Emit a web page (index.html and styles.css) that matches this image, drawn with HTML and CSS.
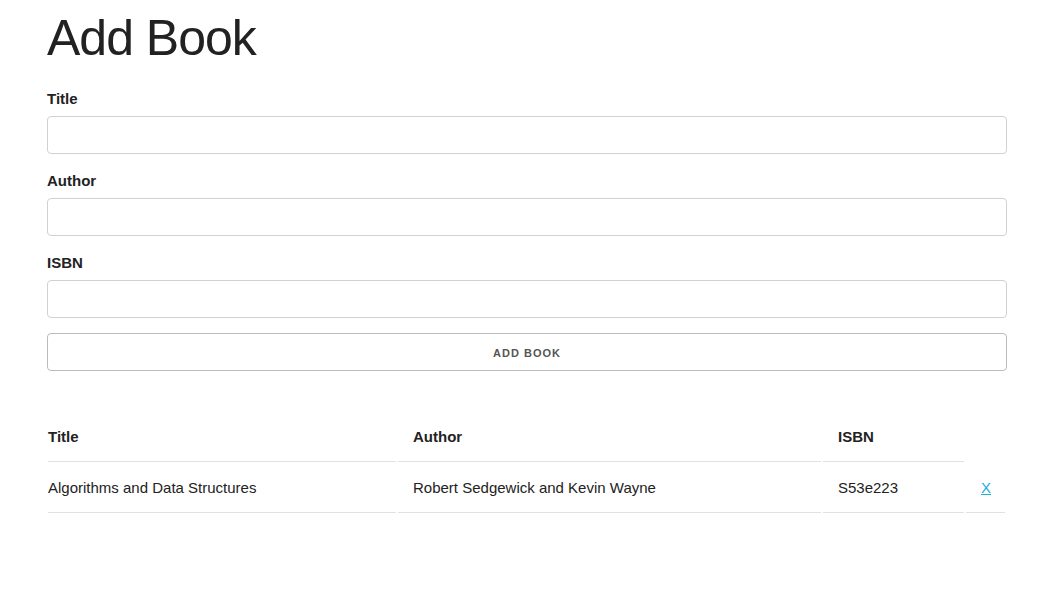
FILE: index.html
```html
<!DOCTYPE html>
<html lang="en">
<head>
    <meta charset="UTF-8">
    <meta name="viewport" content="width=device-width, initial-scale=1.0">
    <title>Add Book</title>
    <link rel="stylesheet" href="styles.css">
</head>
<body>

    <div class="container">
        <h1>Add Book</h1>
        <form id="book-form">
            <label for="title">Title</label>
            <input type="text" id="title" class="u-full-width">

            <label for="author">Author</label>
            <input type="text" id="author" class="u-full-width">

            <label for="isbn">ISBN</label>
            <input type="text" id="isbn" class="u-full-width">

            <button type="submit" class="u-full-width">Add Book</button>
        </form>

        <table class="book-table">
            <thead>
                <tr>
                    <th class="col-title">Title</th>
                    <th class="col-author">Author</th>
                    <th class="col-isbn">ISBN</th>
                </tr>
            </thead>
            <tbody id="book-list">
                <tr>
                    <td>Algorithms and Data Structures</td>
                    <td>Robert Sedgewick and Kevin Wayne</td>
                    <td>S53e223</td>
                    <td><a href="#" class="delete">X</a></td>
                </tr>
            </tbody>
        </table>
    </div>

</body>
</html>
```

FILE: styles.css
```css
html {
    font-size: 62.5%;
}

body {
    margin: 0;
    font-size: 1.5em;
    line-height: 1.6;
    font-weight: 400;
    font-family: "Liberation Sans", Arial, Helvetica, sans-serif;
    color: #222;
    background-color: #fff;
}

.container {
    width: 960px;
    margin-left: 47px;
    padding-top: 8px;
}

h1 {
    margin: 0 0 19px;
    font-size: 5.0rem;
    line-height: 1.2;
    font-weight: 400;
    letter-spacing: -.1rem;
}

label {
    display: block;
    margin-bottom: .5rem;
    font-weight: 700;
}

input[type="text"] {
    height: 38px;
    padding: 6px 10px;
    background-color: #fff;
    border: 1px solid #D1D1D1;
    border-radius: 4px;
    box-shadow: none;
    box-sizing: border-box;
    margin: 0 0 1.5rem;
    font-family: inherit;
    font-size: 1.5rem;
}

.u-full-width {
    width: 100%;
    box-sizing: border-box;
}

button {
    display: block;
    height: 38px;
    padding: 0 30px;
    margin: 0;
    color: #555;
    text-align: center;
    font-family: inherit;
    font-size: 11px;
    font-weight: 700;
    line-height: 38px;
    letter-spacing: .1rem;
    text-transform: uppercase;
    background-color: transparent;
    border-radius: 4px;
    border: 1px solid #bbb;
    cursor: pointer;
}

button:hover {
    color: #333;
    border-color: #888;
}

.book-table {
    width: 961px;
    margin: 40px 0 0 -1px;
    border-spacing: 2px;
}

th,
td {
    padding: 12px 15px;
    text-align: left;
    border-bottom: 1px solid #E1E1E1;
    box-sizing: border-box;
}

th {
    font-weight: 700;
}

th:first-child,
td:first-child {
    padding-left: 0;
}

th:last-child,
td:last-child {
    padding-right: 0;
}

.col-title {
    width: 348px;
}

.col-author {
    width: 423px;
}

.col-isbn {
    width: 141px;
}

a {
    color: #1EAEDB;
}

a:hover {
    color: #0FA0CE;
}
```
